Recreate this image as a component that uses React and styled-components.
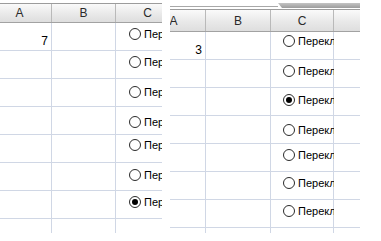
import React from "react";
import styled, { createGlobalStyle } from "styled-components";

const Global = createGlobalStyle`
  html, body { margin: 0; padding: 0; background: #ffffff; }
  body { width: 381px; height: 241px; overflow: hidden; font-family: "Liberation Sans", Arial, sans-serif; }
`;

const Page = styled.div`
  display: flex;
  align-items: flex-start;
  gap: 8px;
  width: 381px;
  height: 241px;
  background: #fff;
`;

const Panel = styled.div`
  position: relative;
  overflow: hidden;
  width: ${(p) => p.$w}px;
  height: ${(p) => p.$h}px;
  padding-top: ${(p) => p.$top}px;
  box-sizing: border-box;
`;

const TopStrip = styled.div`
  display: flex;
  align-items: flex-start;
  height: 9px;
`;

const StripLine = styled.div`
  flex: 1;
  height: 1px;
  margin-top: 6px;
  background: #a8a8a8;
`;

const StripBar = styled.div`
  width: 82px;
  height: 5px;
  margin-top: 3px;
  background: linear-gradient(#c4c4c4, #9c9c9c);
  clip-path: polygon(0 0, 100% 0, 100% 100%, 4px 100%);
`;

const Scroller = styled.div`
  margin-left: -${(p) => p.$offset}px;
`;

const HeaderRow = styled.div`
  display: flex;
  height: ${(p) => p.$h}px;
  box-sizing: border-box;
  border-top: 1px solid #9c9c9c;
  border-bottom: 1px solid #a2a2a2;
  background: linear-gradient(#fafafa, #e9e9e9 55%, #dedede);
`;

const HeaderCell = styled.div`
  flex: none;
  width: ${(p) => p.$w}px;
  box-sizing: border-box;
  border-right: 1px solid #b9b9b9;
  display: flex;
  align-items: center;
  justify-content: center;
  font-size: 12px;
  color: #2a2a2a;
`;

const Row = styled.div`
  display: flex;
  height: ${(p) => p.$h}px;
`;

const Cell = styled.div`
  flex: none;
  width: ${(p) => p.$w}px;
  box-sizing: border-box;
  border-right: 1px solid #d0d7e5;
  border-bottom: ${(p) => (p.$last ? "none" : "1px solid #d0d7e5")};
  display: flex;
  align-items: flex-end;
  justify-content: flex-end;
  padding: 0 3px 2px 0;
  font-size: 12px;
  color: #000;
`;

const RadioControl = styled.label`
  position: absolute;
  display: flex;
  align-items: center;
  gap: 3px;
  height: 14px;
  overflow: hidden;
  white-space: nowrap;
  font-size: 11px;
  color: #000;
`;

const RadioCircle = styled.span`
  flex: none;
  width: 12px;
  height: 12px;
  box-sizing: border-box;
  border-radius: 50%;
  border: 1px solid #2b2b2b;
  background: #fff;
  display: flex;
  align-items: center;
  justify-content: center;
  &::after {
    content: "";
    display: ${(p) => (p.$checked ? "block" : "none")};
    width: 6px;
    height: 6px;
    border-radius: 50%;
    background: #000;
  }
`;

function Sheet({ width, height, top, offset, cols, headerH, rows, lastRowH, values, radios, strip }) {
  return (
    <Panel $w={width} $h={height} $top={top}>
      {strip && (
        <TopStrip>
          <StripLine />
          <StripBar />
        </TopStrip>
      )}
      <Scroller $offset={offset}>
        <HeaderRow $h={headerH}>
          {cols.map((c) => (
            <HeaderCell key={c.label} $w={c.w}>
              {c.label}
            </HeaderCell>
          ))}
        </HeaderRow>
        {Array.from({ length: rows }).map((_, r) => {
          const last = r === rows - 1;
          return (
            <Row key={r} $h={last ? lastRowH : 28}>
              {cols.map((c, ci) => (
                <Cell key={c.label} $w={c.w} $last={last}>
                  {values[`${r}-${ci}`] || ""}
                </Cell>
              ))}
            </Row>
          );
        })}
      </Scroller>
      {radios.items.map((it, i) => (
        <RadioControl
          key={i}
          style={{ left: radios.left, top: it.cy - 7, width: radios.width }}
        >
          <RadioCircle $checked={it.checked} />
          <span>{radios.text}</span>
        </RadioControl>
      ))}
    </Panel>
  );
}

export default function App() {
  return (
    <>
      <Global />
      <Page>
        <Sheet
          width={162}
          height={233}
          top={3}
          offset={12}
          headerH={20}
          cols={[
            { label: "A", w: 64 },
            { label: "B", w: 64 },
            { label: "C", w: 64 },
          ]}
          rows={8}
          lastRowH={15}
          values={{ "0-0": "7" }}
          radios={{
            left: 129,
            width: 40,
            text: "Переключатель",
            items: [
              { cy: 34 },
              { cy: 62 },
              { cy: 92 },
              { cy: 122 },
              { cy: 145 },
              { cy: 175 },
              { cy: 202, checked: true },
            ],
          }}
        />
        <Sheet
          width={190}
          height={233}
          top={0}
          strip
          offset={28}
          headerH={23}
          cols={[
            { label: "A", w: 64 },
            { label: "B", w: 65 },
            { label: "C", w: 63 },
            { label: "D", w: 64 },
          ]}
          rows={8}
          lastRowH={5}
          values={{ "0-0": "3" }}
          radios={{
            left: 113,
            width: 51,
            text: "Переключатель",
            items: [
              { cy: 41 },
              { cy: 71 },
              { cy: 100, checked: true },
              { cy: 130 },
              { cy: 155 },
              { cy: 183 },
              { cy: 211 },
            ],
          }}
        />
      </Page>
    </>
  );
}
